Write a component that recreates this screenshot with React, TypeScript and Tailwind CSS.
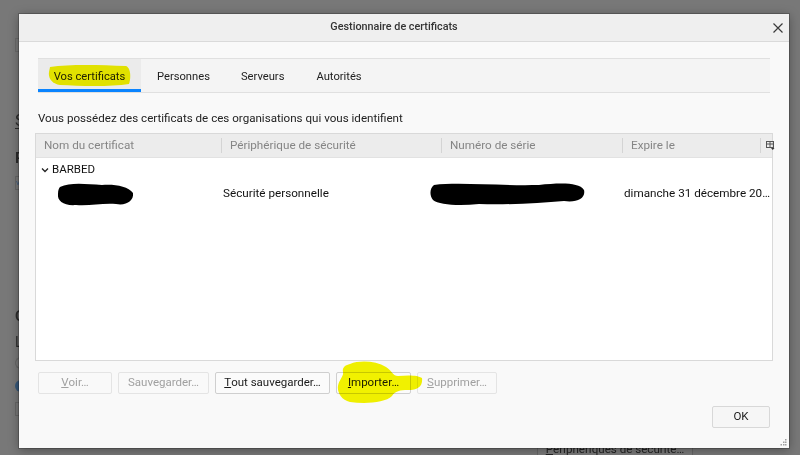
import type { FC, ReactNode } from "react";

const font = { fontFamily: 'Roboto, "Open Sans", "Liberation Sans", sans-serif' };

const Btn: FC<{ label: ReactNode; w: string; disabled?: boolean }> = ({ label, w, disabled }) => (
  <button
    type="button"
    className={
      disabled
        ? `${w} h-[22px] flex items-center justify-center border border-[#e4e4e4] bg-[#f9f9f9] text-[#a0a0a0] text-[11.5px] rounded-[2px]`
        : `${w} h-[22px] flex items-center justify-center border border-[#cfcfcf] bg-[#fbfbfb] text-[#1a1a1a] text-[11.5px] rounded-[2px]`
    }
  >
    {label}
  </button>
);

const HeaderCell: FC<{ label: string; sep?: boolean }> = ({ label, sep }) => (
  <div className="flex items-center h-full">
    {sep && <span className="w-px h-[15px] bg-[#d4d4d4]" />}
    <span className="pl-[8px] text-[11.7px] text-[#858585] whitespace-nowrap">{label}</span>
  </div>
);

const Blob: FC<{ w: number; h: number; d: string }> = ({ w, h, d }) => (
  <svg width={w} height={h} viewBox={`0 0 ${w} ${h}`} className="block">
    <path d={d} fill="#000" />
  </svg>
);

export default function App() {
  return (
    <div className="relative w-[800px] h-[455px] overflow-hidden bg-[#787878]" style={font}>
      {/* dimmed page behind the dialog */}
      <div className="flex flex-col pl-[15px] text-[#2b2b2b]">
        <div className="mt-[38px] w-[6px] h-[14px] border border-[#6a6a6a] border-r-0" />
        <div className="mt-[58px] text-[17px] leading-[20px] underline decoration-1 underline-offset-2">S</div>
        <div className="mt-[18px] text-[15px] leading-[20px] font-semibold">P</div>
        <div className="mt-[8px] w-[6px] h-[14px] border border-[#666] border-r-0 text-[#3a5a80] text-[8px] leading-[12px]">v</div>
        <div className="mt-[116px] text-[15px] leading-[20px] font-semibold">C</div>
        <div className="mt-[7px] text-[14px] leading-[18px]">L</div>
        <div className="mt-[6px] w-[6px] h-[12px] rounded-l-full border border-[#666] border-r-0" />
        <div className="mt-[11px] w-[6px] h-[12px] rounded-l-full bg-[#36587a]" />
        <div className="mt-[10px] w-[6px] h-[14px] border border-[#666] border-r-0" />
      </div>
      <div className="absolute left-[537px] top-[440px] w-[156px] h-[30px] border border-[#666] bg-[#7b7b7b] flex justify-center">
        <span className="text-[11.6px] leading-[16px] text-[#222]"><u>P</u>ériphériques de sécurité…</span>
      </div>

      {/* dialog */}
      <div className="absolute left-[19px] top-[14px] w-[770px] h-[434px] bg-[#f9f9f9] flex flex-col shadow-[0_0_0_1px_rgba(0,0,0,0.2),0_2px_10px_rgba(0,0,0,0.35)]">
        <div className="relative h-[28px] shrink-0 bg-[#efefef] border-b border-[#dadada] flex items-center justify-center pr-[20px]">
          <span className="text-[10.8px] font-medium text-[#333]">Gestionnaire de certificats</span>
          <svg width="10" height="10" viewBox="0 0 10 10" className="absolute right-[6px] top-[9px]">
            <path d="M0.5 0.5 L9.5 9.5 M9.5 0.5 L0.5 9.5" stroke="#3a3a3a" strokeWidth="1.2" />
          </svg>
        </div>

        <div className="flex flex-col px-[19px] flex-1">
          {/* tabs */}
          <div className="mt-[16px] h-[35px] flex border-y border-[#e0e0e0] bg-[#f4f4f4] text-[11.2px] text-[#222]">
            <div className="w-[103px] flex items-center justify-center bg-[#ebebeb] border-b-[3px] border-[#0a84ff] pt-[7px]">
              Vos certificats
            </div>
            <div className="pl-[16px] pr-[15px] flex items-center pt-[4px]">Personnes</div>
            <div className="px-[16px] flex items-center pt-[4px]">Serveurs</div>
            <div className="px-[16px] flex items-center pt-[4px]">Autorités</div>
          </div>

          <p className="mt-[17px] text-[11.6px] leading-[16px] text-[#222]">
            Vous possédez des certificats de ces organisations qui vous identifient
          </p>

          {/* tree table */}
          <div className="mt-[7px] -mx-[3px] h-[228px] border border-[#d9d9d9] bg-white flex flex-col">
            <div className="h-[24px] grid grid-cols-[185px_220px_181px_138px_1fr] bg-[#ececec] border-b border-[#e2e2e2]">
              <HeaderCell label="Nom du certificat" />
              <HeaderCell label="Périphérique de sécurité" sep />
              <HeaderCell label="Numéro de série" sep />
              <HeaderCell label="Expire le" sep />
              <div className="flex items-center h-full">
                <span className="w-px h-[15px] bg-[#d4d4d4]" />
                <svg width="9" height="9" viewBox="0 0 9 9" className="ml-[5px]">
                  <rect x="0.5" y="0.5" width="7" height="6" fill="none" stroke="#555" />
                  <path d="M0.5 3 H7.5 M4 0.5 V6.5" stroke="#555" />
                  <path d="M5 7 L8.5 7 L6.75 9 Z" fill="#333" />
                </svg>
              </div>
            </div>
            <div className="h-[23px] flex items-center pl-[5px] pt-[1px] text-[11.5px] text-[#111]">
              <svg width="8" height="6" viewBox="0 0 8 6" className="mr-[3px]">
                <path d="M1 1.5 L4 4.5 L7 1.5" fill="none" stroke="#222" strokeWidth="1.3" />
              </svg>
              BARBED
            </div>
            <div className="h-[25px] grid grid-cols-[185px_220px_181px_138px_1fr] items-center text-[11.7px] text-[#111]">
              <div className="pl-[20px]">
                <Blob
                  w={78}
                  h={26}
                  d="M4 6 C14 1 30 3 46 4 C58 3 72 5 77 12 C78 20 70 25 60 23 C46 22 34 25 20 24 C8 25 1 20 2 13 C2 9 3 7 4 6 Z"
                />
              </div>
              <div className="pl-[2px] whitespace-nowrap">Sécurité personnelle</div>
              <div className="-ml-[12px]">
                <Blob
                  w={157}
                  h={26}
                  d="M5 4 C30 1 70 5 110 4 C130 2 150 1 155 9 C157 17 148 22 135 20 C110 22 80 24 50 23 C30 25 10 24 4 19 C0 14 1 7 5 4 Z"
                />
              </div>
              <div className="pl-[2px] whitespace-nowrap">dimanche 31 décembre 20…</div>
              <div />
            </div>
          </div>

          {/* actions */}
          <div className="mt-[11px] flex gap-[6px]">
            <Btn w="w-[74px]" disabled label={<><u>V</u>oir…</>} />
            <Btn w="w-[91px]" disabled label={<>Sauve<u>g</u>arder…</>} />
            <Btn w="w-[115px]" label={<><u>T</u>out sauvegarder…</>} />
            <Btn w="w-[75px]" label={<><u>I</u>mporter…</>} />
            <Btn w="w-[80px]" disabled label={<><u>S</u>upprimer…</>} />
          </div>

          <div className="mt-[12px] flex justify-end">
            <button
              type="button"
              className="w-[58px] h-[22px] border border-[#d8d8d8] bg-[#f6f6f6] text-[11.5px] text-[#222] rounded-[2px]"
            >
              OK
            </button>
          </div>
        </div>

        <svg width="7" height="7" viewBox="0 0 7 7" className="absolute right-[2px] bottom-[2px]">
          <g fill="#a0a0a0">
            <rect x="5" y="0" width="1.5" height="1.5" />
            <rect x="3" y="2.5" width="1.5" height="1.5" />
            <rect x="5" y="2.5" width="1.5" height="1.5" />
            <rect x="0.5" y="5" width="1.5" height="1.5" />
            <rect x="3" y="5" width="1.5" height="1.5" />
            <rect x="5" y="5" width="1.5" height="1.5" />
          </g>
        </svg>
      </div>

      {/* highlighter marks */}
      <svg width="800" height="455" viewBox="0 0 800 455" className="absolute inset-0 pointer-events-none mix-blend-multiply">
        <path
          d="M50 67 C70 64 100 65 126 66 C131 68 131 78 129 84 C110 87 80 86 60 85 C52 84 48 78 49 72 Z"
          fill="#f5f500"
        />
        <path
          d="M350 364 C360 360 376 361 386 367 C392 371 393 376 398 376 C408 375 418 375 422 378 C423 386 418 390 408 390 C400 390 395 391 392 396 C385 403 365 404 350 402 C341 400 337 392 338 386 C339 380 344 376 343 372 C342 368 345 365 350 364 Z"
          fill="#f5f500"
        />
      </svg>
    </div>
  );
}
